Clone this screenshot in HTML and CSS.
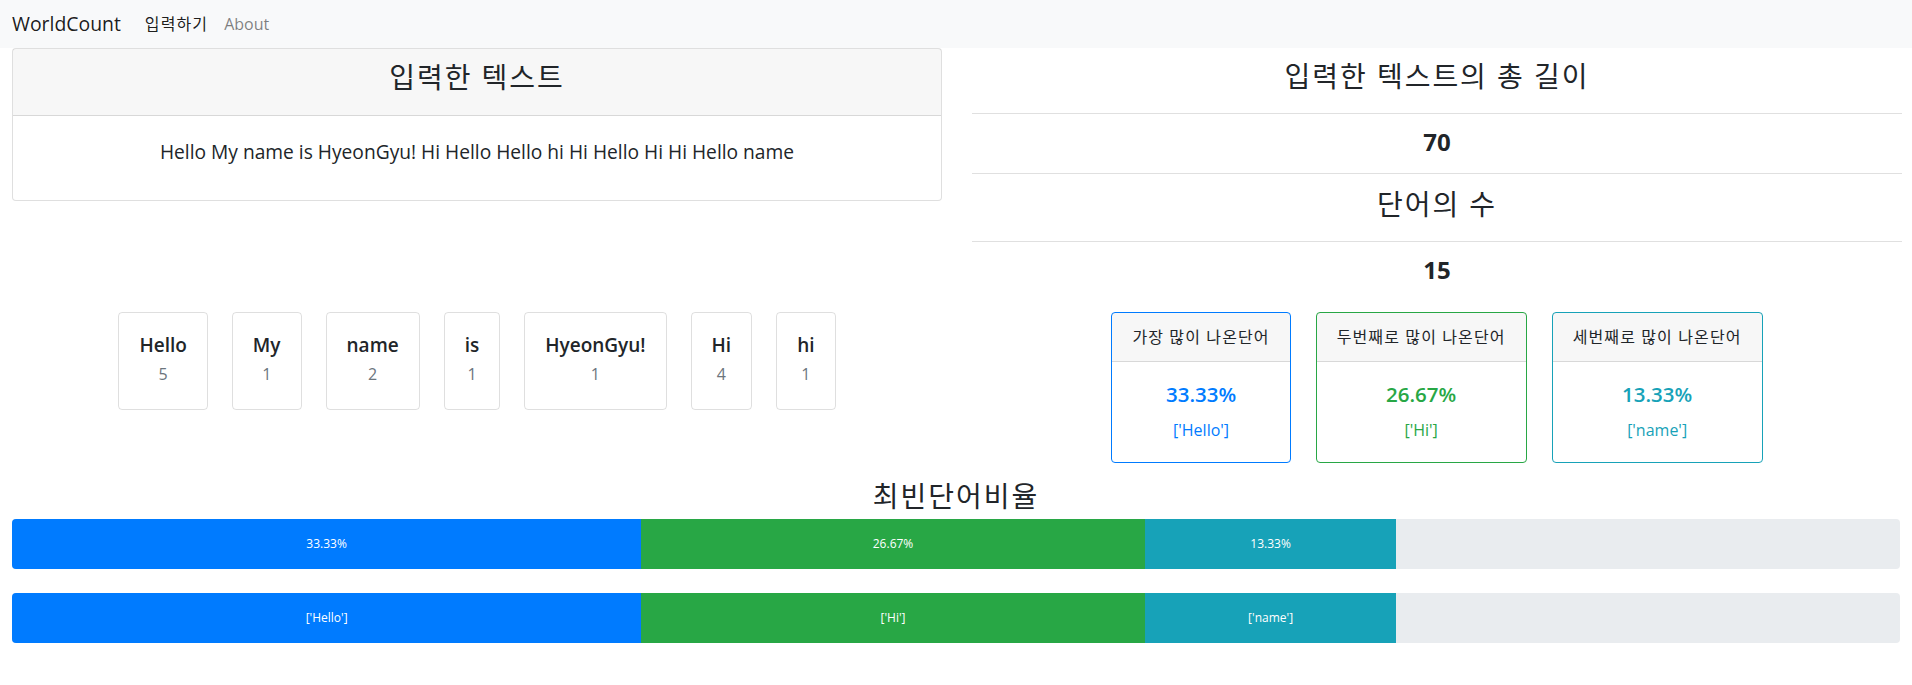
FILE: index.html
```html
<!DOCTYPE html>
<html lang="ko">
<head>
<meta charset="utf-8">
<title>WorldCount</title>
<link rel="stylesheet" href="styles.css">
</head>
<body>
<nav class="navbar">
  <a class="brand">WorldCount</a>
  <a class="nav-link active ko">입력하기</a>
  <a class="nav-link">About</a>
</nav>
<main class="page">
  <section class="row row-top">
    <div class="col col-left">
      <div class="card">
        <div class="card-header"><h3 class="title ko">입력한 텍스트</h3></div>
        <div class="card-body input-body"><h5 class="input-text">Hello My name is HyeonGyu! Hi Hello Hello hi Hi Hello Hi Hi Hello name</h5></div>
      </div>
    </div>
    <div class="col col-right stats">
      <h3 class="title ko">입력한 텍스트의 총 길이</h3>
      <hr class="rule">
      <h4 class="stat">70</h4>
      <hr class="rule">
      <h3 class="title ko">단어의 수</h3>
      <hr class="rule">
      <h4 class="stat">15</h4>
    </div>
  </section>
  <section class="row row-mid">
    <div class="col col-left words">
      <div class="word-card"><h5 class="word">Hello</h5><div class="count">5</div></div>
      <div class="word-card"><h5 class="word">My</h5><div class="count">1</div></div>
      <div class="word-card"><h5 class="word">name</h5><div class="count">2</div></div>
      <div class="word-card"><h5 class="word">is</h5><div class="count">1</div></div>
      <div class="word-card"><h5 class="word">HyeonGyu!</h5><div class="count">1</div></div>
      <div class="word-card"><h5 class="word">Hi</h5><div class="count">4</div></div>
      <div class="word-card"><h5 class="word">hi</h5><div class="count">1</div></div>
    </div>
    <div class="col col-right tops">
      <div class="top-card primary">
        <div class="top-header ko">가장 많이 나온단어</div>
        <div class="top-body"><h5 class="pct">33.33%</h5><p class="top-word">['Hello']</p></div>
      </div>
      <div class="top-card success">
        <div class="top-header ko">두번째로 많이 나온단어</div>
        <div class="top-body"><h5 class="pct">26.67%</h5><p class="top-word">['Hi']</p></div>
      </div>
      <div class="top-card info">
        <div class="top-header ko">세번째로 많이 나온단어</div>
        <div class="top-body"><h5 class="pct">13.33%</h5><p class="top-word">['name']</p></div>
      </div>
    </div>
  </section>
  <h3 class="title ko ratio-title">최빈단어비율</h3>
  <div class="progress">
    <div class="bar bar-blue" style="width:33.33%">33.33%</div>
    <div class="bar bar-green" style="width:26.67%">26.67%</div>
    <div class="bar bar-teal" style="width:13.33%">13.33%</div>
  </div>
  <div class="progress">
    <div class="bar bar-blue" style="width:33.33%">['Hello']</div>
    <div class="bar bar-green" style="width:26.67%">['Hi']</div>
    <div class="bar bar-teal" style="width:13.33%">['name']</div>
  </div>
</main>
</body>
</html>
```
FILE: styles.css
```css
* { box-sizing: border-box; }

body {
  margin: 0;
  font-family: "Open Sans", "Noto Sans CJK KR", sans-serif;
  font-size: 16px;
  line-height: 1.5;
  color: #212529;
  background: #fff;
}

h3, h4, h5, p { margin: 0; }

.ko { letter-spacing: 0.07em; }

.navbar {
  display: flex;
  align-items: center;
  height: 48px;
  padding: 0 12px;
  background: #f8f9fa;
}

.brand {
  font-size: 19.4px;
  line-height: 30px;
  margin-right: 16px;
  color: rgba(0, 0, 0, 0.9);
}

.nav-link {
  padding: 0 8px;
  font-size: 16px;
  line-height: 24px;
  color: rgba(0, 0, 0, 0.5);
}

.nav-link.active { color: rgba(0, 0, 0, 0.9); }

.row {
  display: grid;
  grid-template-columns: 1fr 1fr;
  align-items: start;
}

.col-left { padding: 0 14px 0 12px; }
.col-right { padding: 0 10px 0 16px; }

.title {
  font-size: 28px;
  line-height: 1.2;
  font-weight: 400;
  text-align: center;
}

.card {
  border: 1px solid rgba(0, 0, 0, 0.125);
  border-radius: 4px;
  background: #fff;
}

.card-header {
  padding: 12px 20px;
  background: rgba(0, 0, 0, 0.03);
  border-bottom: 1px solid rgba(0, 0, 0, 0.125);
}

.card-header .title { margin-bottom: 8px; }

.input-body {
  padding: 24px 20px 36px;
  text-align: center;
}

.input-text {
  font-size: 19.2px;
  line-height: 24px;
  font-weight: 400;
}

.stats { padding-top: 12px; text-align: center; }

.rule {
  margin: 19px 0 14px;
  border: 0;
  border-top: 1px solid rgba(0, 0, 0, 0.12);
}

.stats .stat + .rule { margin-top: 17px; }

.stat {
  font-size: 24px;
  line-height: 1.2;
  font-weight: 700;
}

.row-mid { margin-top: 27px; }

.words {
  display: flex;
  justify-content: center;
  align-items: flex-start;
  gap: 24px;
}

.word-card {
  border: 1px solid rgba(0, 0, 0, 0.125);
  border-radius: 4px;
  padding: 20px 20px 25px;
  text-align: center;
}

.word {
  font-size: 19px;
  line-height: 24px;
  font-weight: 600;
  margin-bottom: 8px;
}

.count {
  font-size: 16px;
  line-height: 19px;
  font-weight: 500;
  color: #6c757d;
}

.tops {
  display: flex;
  justify-content: center;
  align-items: flex-start;
  gap: 25px;
}

.top-card {
  border: 1px solid;
  border-radius: 4px;
  text-align: center;
  white-space: nowrap;
}

.top-header {
  padding: 12px 20px;
  line-height: 24px;
  background: rgba(0, 0, 0, 0.03);
  border-bottom: 1px solid rgba(0, 0, 0, 0.125);
}

.top-body { padding: 20px; }

.pct {
  font-size: 20.5px;
  line-height: 24px;
  font-weight: 600;
  margin-bottom: 12px;
}

.top-word { line-height: 24px; }

.primary { border-color: #007bff; }
.primary .pct, .primary .top-word { color: #007bff; }
.success { border-color: #28a745; }
.success .pct, .success .top-word { color: #28a745; }
.info { border-color: #17a2b8; }
.info .pct, .info .top-word { color: #17a2b8; }

.ratio-title { margin: 17px 0 6px; }

.progress {
  display: flex;
  height: 50px;
  margin: 0 12px 24px;
  background: #e9ecef;
  border-radius: 4px;
  overflow: hidden;
  font-size: 12px;
}

.bar {
  display: flex;
  align-items: center;
  justify-content: center;
  color: #fff;
  white-space: nowrap;
}

.bar-blue { background: #007bff; }
.bar-green { background: #28a745; }
.bar-teal { background: #17a2b8; }
```
